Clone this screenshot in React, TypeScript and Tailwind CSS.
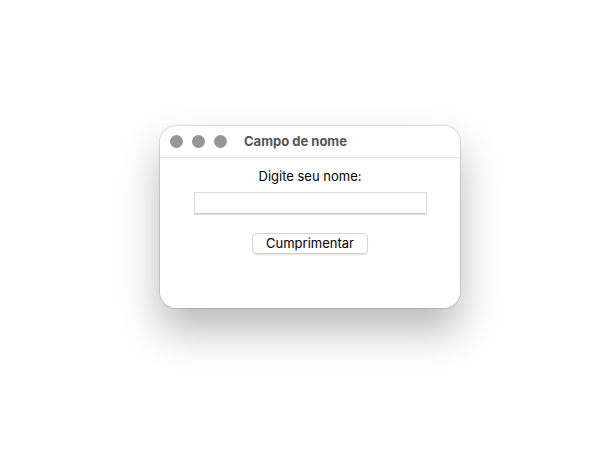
export default function App() {
  return (
    <div className="flex h-[455px] w-[612px] items-start justify-center bg-white pl-[8px] pt-[126px] font-['Inter','Liberation_Sans',sans-serif]">
      <div className="flex h-[182px] w-[300px] flex-col overflow-hidden rounded-[16px] bg-white shadow-[0_0_0_1px_rgba(0,0,0,0.12),0_22px_40px_rgba(0,0,0,0.28)]">
        <div className="flex h-[32px] shrink-0 items-center border-b border-[#e6e6e6] pl-[10px]">
          <div className="flex gap-[9px]">
            <span className="h-[13px] w-[13px] rounded-full bg-[#969696]" />
            <span className="h-[13px] w-[13px] rounded-full bg-[#969696]" />
            <span className="h-[13px] w-[13px] rounded-full bg-[#969696]" />
          </div>
          <span className="ml-[17px] text-[13px] font-bold text-[#555555]">Campo de nome</span>
        </div>
        <div className="flex flex-col items-center pt-[10px]">
          <p className="text-[13px] leading-[17px] text-black">Digite seu nome:</p>
          <input
            className="mt-[7px] h-[23px] w-[233px] border border-[#dcdcdc] bg-white px-1 text-[13px] shadow-[inset_0_-1px_0_#c8c8c8] outline-none"
            type="text"
          />
          <button className="mt-[18px] h-[21px] w-[116px] rounded-[5px] border border-[#d4d4d4] bg-white text-[13px] leading-none text-black shadow-[0_1px_1px_rgba(0,0,0,0.12)]">
            Cumprimentar
          </button>
        </div>
      </div>
    </div>
  )
}
